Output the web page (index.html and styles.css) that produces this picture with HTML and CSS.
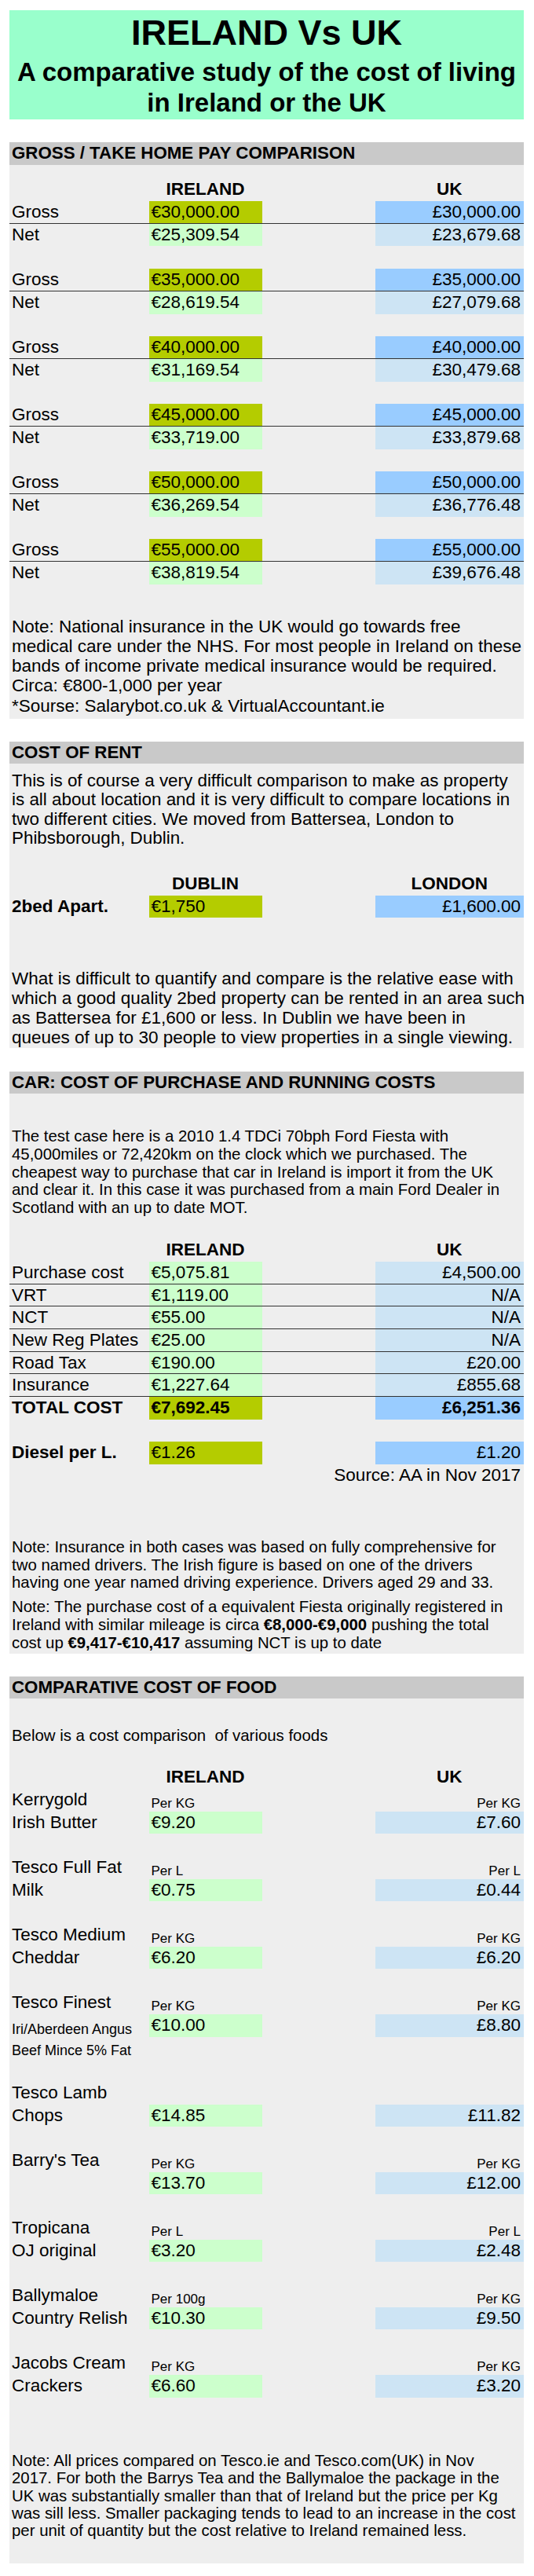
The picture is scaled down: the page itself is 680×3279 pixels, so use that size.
FILE: index.html
```html
<!DOCTYPE html>
<html lang="en">
<head>
<meta charset="utf-8">
<title>IRELAND Vs UK</title>
<link rel="stylesheet" href="styles.css">
</head>
<body>
<div class="page">
  <header class="title">
    <h1>IRELAND Vs UK</h1>
    <p>A comparative study of the cost of living<br>in Ireland or the UK</p>
  </header>

  <section class="sec">
    <h2 class="sec-head">GROSS / TAKE HOME PAY COMPARISON</h2>
    <div class="sec-body pay">
      <div class="row hdr"><div></div><div>IRELAND</div><div></div><div>UK</div></div>

      <div class="row ruled"><div class="lbl">Gross</div><div class="ie lime">€30,000.00</div><div></div><div class="uk blue">£30,000.00</div></div>
      <div class="row"><div class="lbl">Net</div><div class="ie lg">€25,309.54</div><div></div><div class="uk lb">£23,679.68</div></div>
      <div class="gap"></div>
      <div class="row ruled"><div class="lbl">Gross</div><div class="ie lime">€35,000.00</div><div></div><div class="uk blue">£35,000.00</div></div>
      <div class="row"><div class="lbl">Net</div><div class="ie lg">€28,619.54</div><div></div><div class="uk lb">£27,079.68</div></div>
      <div class="gap"></div>
      <div class="row ruled"><div class="lbl">Gross</div><div class="ie lime">€40,000.00</div><div></div><div class="uk blue">£40,000.00</div></div>
      <div class="row"><div class="lbl">Net</div><div class="ie lg">€31,169.54</div><div></div><div class="uk lb">£30,479.68</div></div>
      <div class="gap"></div>
      <div class="row ruled"><div class="lbl">Gross</div><div class="ie lime">€45,000.00</div><div></div><div class="uk blue">£45,000.00</div></div>
      <div class="row"><div class="lbl">Net</div><div class="ie lg">€33,719.00</div><div></div><div class="uk lb">£33,879.68</div></div>
      <div class="gap"></div>
      <div class="row ruled"><div class="lbl">Gross</div><div class="ie lime">€50,000.00</div><div></div><div class="uk blue">£50,000.00</div></div>
      <div class="row"><div class="lbl">Net</div><div class="ie lg">€36,269.54</div><div></div><div class="uk lb">£36,776.48</div></div>
      <div class="gap"></div>
      <div class="row ruled"><div class="lbl">Gross</div><div class="ie lime">€55,000.00</div><div></div><div class="uk blue">£55,000.00</div></div>
      <div class="row"><div class="lbl">Net</div><div class="ie lg">€38,819.54</div><div></div><div class="uk lb">£39,676.48</div></div>

      <p class="txt pay-note">Note: National insurance in the UK would go towards free<br>medical care under the NHS. For most people in Ireland on these<br>bands of income private medical insurance would be required.<br>Circa: €800-1,000 per year</p>
      <p class="txt pay-src">*Sourse: Salarybot.co.uk &amp; VirtualAccountant.ie</p>
    </div>
  </section>

  <section class="sec">
    <h2 class="sec-head">COST OF RENT</h2>
    <div class="sec-body rent">
      <p class="txt rent-intro">This is of course a very difficult comparison to make as property<br>is all about location and it is very difficult to compare locations in<br>two different cities. We moved from Battersea, London to<br>Phibsborough, Dublin.</p>
      <div class="row hdr rent-hdr"><div></div><div>DUBLIN</div><div></div><div>LONDON</div></div>
      <div class="row"><div class="lbl strong">2bed Apart.</div><div class="ie lime">€1,750</div><div></div><div class="uk blue">£1,600.00</div></div>
      <p class="txt rent-note">What is difficult to quantify and compare is the relative ease with<br>which a good quality 2bed property can be rented in an area such<br>as Battersea for £1,600 or less. In Dublin we have been in<br>queues of up to 30 people to view properties in a single viewing.</p>
    </div>
  </section>

  <section class="sec sec-car">
    <h2 class="sec-head">CAR: COST OF PURCHASE AND RUNNING COSTS</h2>
    <div class="sec-body car">
      <p class="txt small car-intro">The test case here is a 2010 1.4 TDCi 70bph Ford Fiesta with<br>45,000miles or 72,420km on the clock which we purchased. The<br>cheapest way to purchase that car in Ireland is import it from the UK<br>and clear it. In this case it was purchased from a main Ford Dealer in<br>Scotland with an up to date MOT.</p>
      <div class="row hdr car-hdr"><div></div><div>IRELAND</div><div></div><div>UK</div></div>
      <div class="row ruled"><div class="lbl">Purchase cost</div><div class="ie lg">€5,075.81</div><div></div><div class="uk lb">£4,500.00</div></div>
      <div class="row ruled"><div class="lbl">VRT</div><div class="ie lg">€1,119.00</div><div></div><div class="uk lb">N/A</div></div>
      <div class="row ruled"><div class="lbl">NCT</div><div class="ie lg">€55.00</div><div></div><div class="uk lb">N/A</div></div>
      <div class="row ruled"><div class="lbl">New Reg Plates</div><div class="ie lg">€25.00</div><div></div><div class="uk lb">N/A</div></div>
      <div class="row ruled"><div class="lbl">Road Tax</div><div class="ie lg">€190.00</div><div></div><div class="uk lb">£20.00</div></div>
      <div class="row ruled"><div class="lbl">Insurance</div><div class="ie lg">€1,227.64</div><div></div><div class="uk lb">£855.68</div></div>
      <div class="row strong"><div class="lbl">TOTAL COST</div><div class="ie lime">€7,692.45</div><div></div><div class="uk blue">£6,251.36</div></div>
      <div class="gap"></div>
      <div class="row"><div class="lbl strong">Diesel per L.</div><div class="ie lime">€1.26</div><div></div><div class="uk blue">£1.20</div></div>
      <div class="row"><div class="src">Source: AA in Nov 2017</div></div>
      <p class="txt small car-note1">Note: Insurance in both cases was based on fully comprehensive for<br>two named drivers. The Irish figure is based on one of the drivers<br>having one year named driving experience. Drivers aged 29 and 33.</p>
      <p class="txt small car-note2">Note: The purchase cost of a equivalent Fiesta originally registered in<br>Ireland with similar mileage is circa <b>€8,000-€9,000</b> pushing the total<br>cost up <b>€9,417-€10,417</b> assuming NCT is up to date</p>
    </div>
  </section>

  <section class="sec">
    <h2 class="sec-head">COMPARATIVE COST OF FOOD</h2>
    <div class="sec-body food">
      <div class="gap"></div>
      <div class="row"><div class="intro">Below is a cost comparison &nbsp;of various foods</div></div>
      <div class="gap"></div>
      <div class="row hdr"><div></div><div>IRELAND</div><div></div><div>UK</div></div>

      <div class="row"><div class="lbl">Kerrygold</div><div class="ie unit">Per KG</div><div></div><div class="uk unit">Per KG</div></div>
      <div class="row"><div class="lbl">Irish Butter</div><div class="ie lg">€9.20</div><div></div><div class="uk lb">£7.60</div></div>
      <div class="gap"></div>
      <div class="row"><div class="lbl">Tesco Full Fat</div><div class="ie unit">Per L</div><div></div><div class="uk unit">Per L</div></div>
      <div class="row"><div class="lbl">Milk</div><div class="ie lg">€0.75</div><div></div><div class="uk lb">£0.44</div></div>
      <div class="gap"></div>
      <div class="row"><div class="lbl">Tesco Medium</div><div class="ie unit">Per KG</div><div></div><div class="uk unit">Per KG</div></div>
      <div class="row"><div class="lbl">Cheddar</div><div class="ie lg">€6.20</div><div></div><div class="uk lb">£6.20</div></div>
      <div class="gap"></div>
      <div class="row"><div class="lbl">Tesco Finest</div><div class="ie unit">Per KG</div><div></div><div class="uk unit">Per KG</div></div>
      <div class="row"><div class="lbl sub">Iri/Aberdeen Angus</div><div class="ie lg">€10.00</div><div></div><div class="uk lb">£8.80</div></div>
      <div class="row"><div class="lbl sub sub2">Beef Mince 5% Fat</div></div>
      <div class="gap"></div>
      <div class="row"><div class="lbl">Tesco Lamb</div></div>
      <div class="row"><div class="lbl">Chops</div><div class="ie lg">€14.85</div><div></div><div class="uk lb">£11.82</div></div>
      <div class="gap"></div>
      <div class="row"><div class="lbl">Barry's Tea</div><div class="ie unit">Per KG</div><div></div><div class="uk unit">Per KG</div></div>
      <div class="row"><div class="lbl"></div><div class="ie lg">€13.70</div><div></div><div class="uk lb">£12.00</div></div>
      <div class="gap"></div>
      <div class="row"><div class="lbl">Tropicana</div><div class="ie unit">Per L</div><div></div><div class="uk unit">Per L</div></div>
      <div class="row"><div class="lbl">OJ original</div><div class="ie lg">€3.20</div><div></div><div class="uk lb">£2.48</div></div>
      <div class="gap"></div>
      <div class="row"><div class="lbl">Ballymaloe</div><div class="ie unit">Per 100g</div><div></div><div class="uk unit">Per KG</div></div>
      <div class="row"><div class="lbl">Country Relish</div><div class="ie lg">€10.30</div><div></div><div class="uk lb">£9.50</div></div>
      <div class="gap"></div>
      <div class="row"><div class="lbl">Jacobs Cream</div><div class="ie unit">Per KG</div><div></div><div class="uk unit">Per KG</div></div>
      <div class="row"><div class="lbl">Crackers</div><div class="ie lg">€6.60</div><div></div><div class="uk lb">£3.20</div></div>

      <p class="txt small food-note">Note: All prices compared on Tesco.ie and Tesco.com(UK) in Nov<br>2017. For both the Barrys Tea and the Ballymaloe the package in the<br>UK was substantially smaller than that of Ireland but the price per Kg<br>was sill less. Smaller packaging tends to lead to an increase in the cost<br>per unit of quantity but the cost relative to Ireland remained less.</p>
    </div>
  </section>
</div>
</body>
</html>
```

FILE: styles.css
```css
:root {
  --r: 28.7px;
}

* {
  box-sizing: border-box;
}

body {
  margin: 0;
  background: #ffffff;
  color: #000000;
  font-family: "Liberation Sans", Arial, sans-serif;
}

.page {
  padding: 13px 13px 15px 12px;
}

/* Title */
.title {
  background: #99ffcc;
  text-align: center;
  padding: 3px 0 2px;
}

.title h1 {
  margin: 0;
  font-size: 45px;
  line-height: 51px;
  font-weight: bold;
}

.title p {
  margin: 6px 0 0;
  font-size: 33px;
  line-height: 38.5px;
  font-weight: bold;
}

/* Sections */
.sec {
  margin-top: 29px;
}

.sec-car {
  margin-top: 30px;
}

.sec-head {
  margin: 0;
  height: var(--r);
  background: #c9c9c9;
  font-size: 22.3px;
  line-height: var(--r);
  font-weight: bold;
  padding-left: 3px;
  white-space: nowrap;
}

.sec-body {
  background: #eeeeee;
}

/* Rows */
.row {
  display: grid;
  grid-template-columns: 177.5px 144px 144px 1fr;
  grid-auto-rows: var(--r);
  font-size: 22.5px;
  line-height: var(--r);
  white-space: nowrap;
}

.gap {
  height: var(--r);
}

.lbl {
  padding-left: 3px;
}

.ie {
  padding-left: 3px;
}

.uk {
  padding-right: 4px;
  text-align: right;
}

.hdr > div {
  font-weight: bold;
  text-align: center;
}

.ruled > div {
  border-bottom: 1px solid #333333;
}

.strong {
  font-weight: bold;
}

.lime {
  background: #b4cc00;
}

.lg {
  background: #ccffcc;
}

.blue {
  background: #99ccff;
}

.lb {
  background: #cde4f4;
}

.unit {
  align-self: end;
  font-size: 17px;
  line-height: 20px;
}

.sub {
  align-self: end;
  font-size: 18px;
  line-height: 20px;
}

.sub2 {
  line-height: 22px;
}

.src {
  grid-column: 2 / 5;
  text-align: right;
  padding-right: 4px;
}

.intro {
  grid-column: 1 / 5;
  align-self: end;
  padding-left: 3px;
  font-size: 20.4px;
  line-height: 22px;
}

/* Free text blocks */
.txt {
  margin: 0;
  padding-left: 3px;
  font-size: 22.5px;
  line-height: 25px;
  white-space: nowrap;
}

.txt.small {
  font-size: 20.4px;
}

/* Section 1 */
.pay {
  padding: 17.7px 0 1.3px;
}

.pay-note {
  margin-top: 41px;
}

.pay-src {
  line-height: var(--r);
}

/* Section 2 */
.rent {
  padding: 9.3px 0 1px;
}

.rent-intro {
  font-size: 22.4px;
  line-height: 24.5px;
}

.rent-hdr {
  margin-top: 31.3px;
}

.rent-note {
  margin-top: 64.3px;
}

/* Section 3 */
.car {
  padding: 42.9px 0 2px;
}

.car-intro {
  line-height: 22.7px;
}

.car-hdr {
  margin-top: 28.4px;
}

.car-note1 {
  margin-top: 65.5px;
  line-height: 22.5px;
}

.car-note2 {
  margin-top: 8.4px;
  line-height: 22.8px;
}

/* Section 4 */
.food {
  padding: 0 0 30.7px;
}

.food-note {
  margin-top: 69.4px;
  line-height: 22.3px;
}
```
